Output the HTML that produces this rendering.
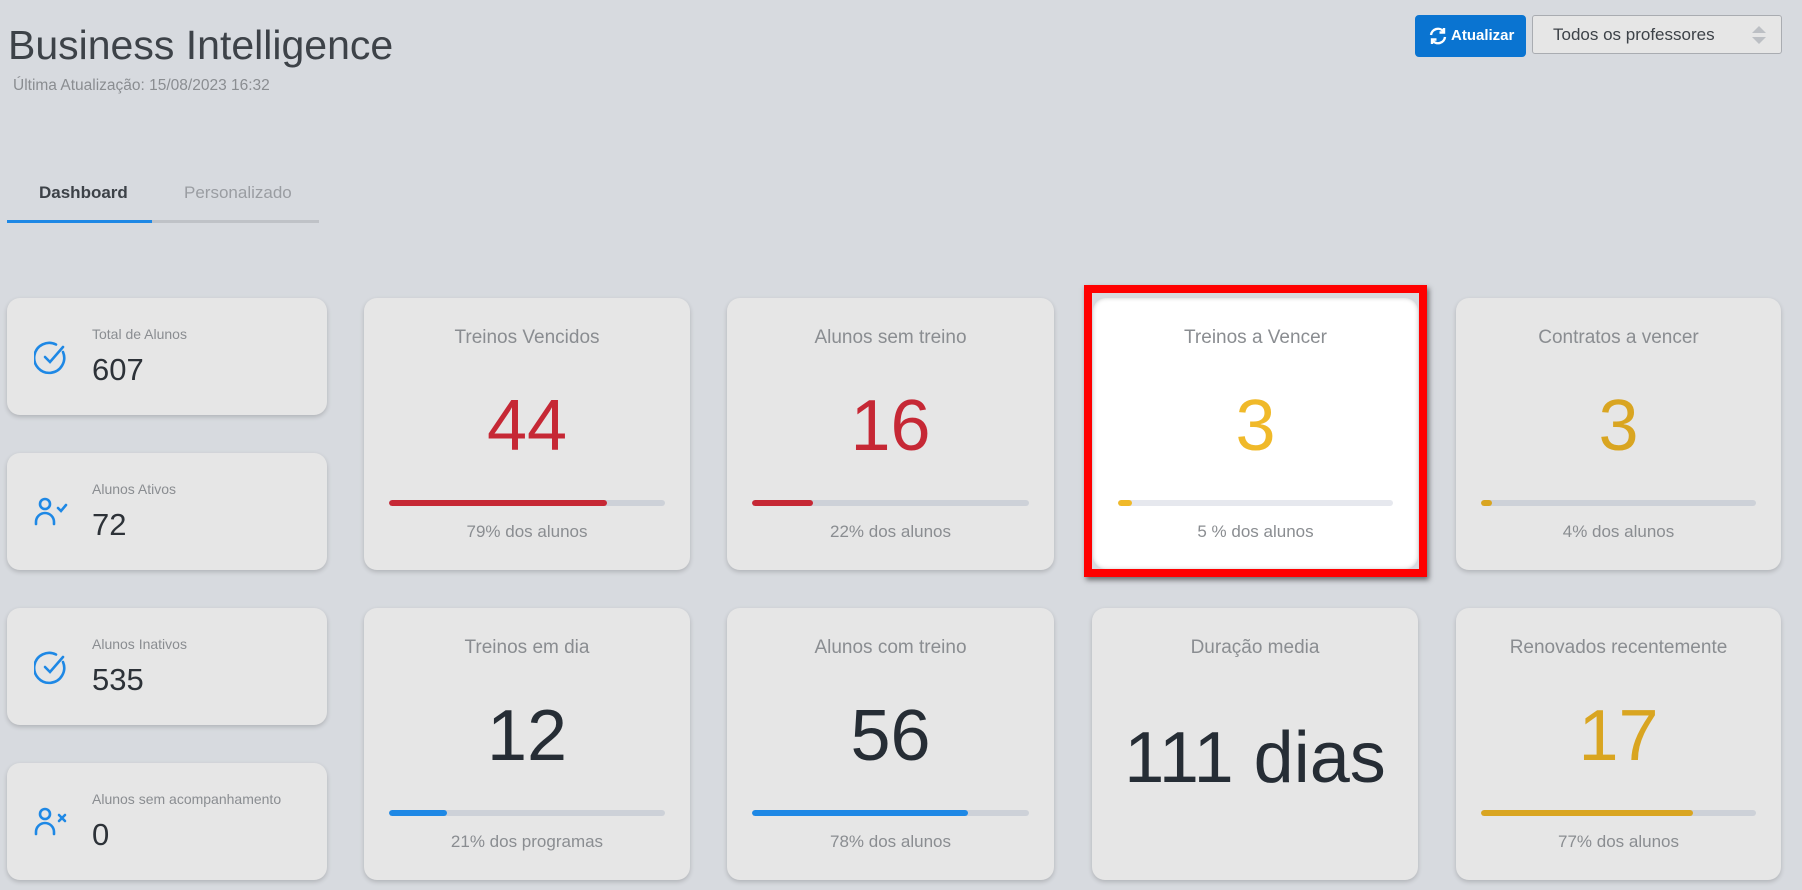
<!DOCTYPE html>
<html><head><meta charset="utf-8"><style>
*{margin:0;padding:0;box-sizing:border-box}
body{width:1802px;height:890px;background:#d7dadf;font-family:"Liberation Sans",sans-serif;position:relative;overflow:hidden}
.a{position:absolute}
.card{position:absolute;background:#e6e6e6;border-radius:13px;box-shadow:0 2px 5px rgba(0,0,0,.18)}
.sm .lbl{position:absolute;left:85px;top:28px;font-size:14px;color:#8a8d91}
.sm .num{position:absolute;left:85px;top:54px;font-size:31px;color:#2d3238}
.sm svg{position:absolute;left:27px;top:43px}
.big .t{position:absolute;left:0;right:0;top:29px;text-align:center;font-size:19px;color:#8a8d91}
.big .n{position:absolute;left:0;right:0;top:88px;text-align:center;font-size:72px;line-height:80px}
.big .bar{position:absolute;left:25px;right:25px;top:202px;height:6px;border-radius:3px;background:#cdd1d8;overflow:hidden}
.big .bar i{display:block;height:100%;border-radius:3px}
.big .f{position:absolute;left:0;right:0;top:224px;text-align:center;font-size:17px;color:#8a8d91}
</style></head><body>
<div class="a" style="left:8px;top:22px;font-size:41px;color:#3d4248">Business Intelligence</div>
<div class="a" style="left:13px;top:77px;font-size:15.5px;color:#8a8d91">Última Atualização: 15/08/2023 16:32</div>
<div class="a" style="left:39px;top:183px;font-size:17px;font-weight:bold;color:#3d4248">Dashboard</div>
<div class="a" style="left:184px;top:183px;font-size:17px;color:#9a9da2">Personalizado</div>
<div class="a" style="left:7px;top:220px;width:312px;height:3px;background:#bfc2c7"></div>
<div class="a" style="left:7px;top:220px;width:145px;height:3px;background:#1e88e5"></div>

<div class="a" style="left:1415px;top:15px;width:111px;height:42px;background:#0a74d1;border-radius:4px;color:#fff;font-size:15px;font-weight:bold;line-height:42px;padding-left:36px">Atualizar
<svg class="a" style="left:13px;top:12px" width="20" height="18" viewBox="0 0 20 18" fill="none" stroke="#fff" stroke-width="2.4"><path d="M3 8a7 7 0 0 1 12.5-3.5"/><path d="M16 1v4.5h-4.5"/><path d="M17 10a7 7 0 0 1-12.5 3.5"/><path d="M4 17v-4.5h4.5"/></svg></div>
<div class="a" style="left:1532px;top:15px;width:250px;height:39px;background:#e6e6e6;border:1px solid #a9acb1;border-radius:3px;font-size:17px;color:#3d4248;line-height:37px;padding-left:20px">Todos os professores
<svg class="a" style="left:218px;top:9px" width="16" height="20" viewBox="0 0 16 20"><path d="M8 1l7 7H1z" fill="#bcbfc4"/><path d="M8 19l7-7H1z" fill="#bcbfc4"/></svg></div>

<div class="card sm" style="left:7px;top:298px;width:320px;height:117px">
<svg width="34" height="34" viewBox="0 0 34 34" fill="none" stroke="#1e88e5" stroke-width="2.6" stroke-linecap="round"><path d="M29 11A15 15 0 1 1 22 3.5"/><path d="M11 16l5 5 13-15"/></svg>
<div class="lbl">Total de Alunos</div><div class="num">607</div></div>
<div class="card sm" style="left:7px;top:453px;width:320px;height:117px">
<svg width="34" height="34" viewBox="0 0 34 34" fill="none" stroke="#1e88e5" stroke-width="2.6" stroke-linecap="round"><circle cx="11" cy="8" r="5"/><path d="M2 28v-2a9 9 0 0 1 18 0v2"/><path d="M24 12l3 3 5-6"/></svg>
<div class="lbl">Alunos Ativos</div><div class="num">72</div></div>
<div class="card sm" style="left:7px;top:608px;width:320px;height:117px">
<svg width="34" height="34" viewBox="0 0 34 34" fill="none" stroke="#1e88e5" stroke-width="2.6" stroke-linecap="round"><path d="M29 11A15 15 0 1 1 22 3.5"/><path d="M11 16l5 5 13-15"/></svg>
<div class="lbl">Alunos Inativos</div><div class="num">535</div></div>
<div class="card sm" style="left:7px;top:763px;width:320px;height:117px">
<svg width="34" height="34" viewBox="0 0 34 34" fill="none" stroke="#1e88e5" stroke-width="2.6" stroke-linecap="round"><circle cx="11" cy="8" r="5"/><path d="M2 28v-2a9 9 0 0 1 18 0v2"/><path d="M25 9l6 6M31 9l-6 6"/></svg>
<div class="lbl">Alunos sem acompanhamento</div><div class="num">0</div></div>

<div class="card big" style="left:364px;top:298px;width:326px;height:272px">
<div class="t">Treinos Vencidos</div><div class="n" style="color:#c62835">44</div>
<div class="bar"><i style="width:79%;background:#c62835"></i></div><div class="f">79% dos alunos</div></div>
<div class="card big" style="left:727px;top:298px;width:327px;height:272px">
<div class="t">Alunos sem treino</div><div class="n" style="color:#c62835">16</div>
<div class="bar"><i style="width:22%;background:#c62835"></i></div><div class="f">22% dos alunos</div></div>
<div class="a" style="left:1084px;top:285px;width:343px;height:292px;border:8px solid #ff0000;box-shadow:2px 3px 5px rgba(0,0,0,.5)"></div>
<div class="card big" style="left:1093px;top:298px;width:325px;height:271px;background:#fff;box-shadow:inset 0 0 4px rgba(0,0,0,.2)">
<div class="t">Treinos a Vencer</div><div class="n" style="color:#f0b929">3</div>
<div class="bar" style="background:#e6e8ee"><i style="width:5%;background:#f0b929"></i></div><div class="f">5 % dos alunos</div></div>
<div class="card big" style="left:1456px;top:298px;width:325px;height:272px">
<div class="t">Contratos a vencer</div><div class="n" style="color:#d9a521">3</div>
<div class="bar"><i style="width:4%;background:#d9a521"></i></div><div class="f">4% dos alunos</div></div>

<div class="card big" style="left:364px;top:608px;width:326px;height:272px">
<div class="t">Treinos em dia</div><div class="n" style="color:#262d35">12</div>
<div class="bar"><i style="width:21%;background:#1e88e5"></i></div><div class="f">21% dos programas</div></div>
<div class="card big" style="left:727px;top:608px;width:327px;height:272px">
<div class="t">Alunos com treino</div><div class="n" style="color:#262d35">56</div>
<div class="bar"><i style="width:78%;background:#1e88e5"></i></div><div class="f">78% dos alunos</div></div>
<div class="card big" style="left:1092px;top:608px;width:326px;height:272px">
<div class="t">Duração media</div><div class="n" style="color:#262d35;top:110px">111 dias</div></div>
<div class="card big" style="left:1456px;top:608px;width:325px;height:272px">
<div class="t">Renovados recentemente</div><div class="n" style="color:#d9a521">17</div>
<div class="bar"><i style="width:77%;background:#d9a521"></i></div><div class="f">77% dos alunos</div></div>
</body></html>
